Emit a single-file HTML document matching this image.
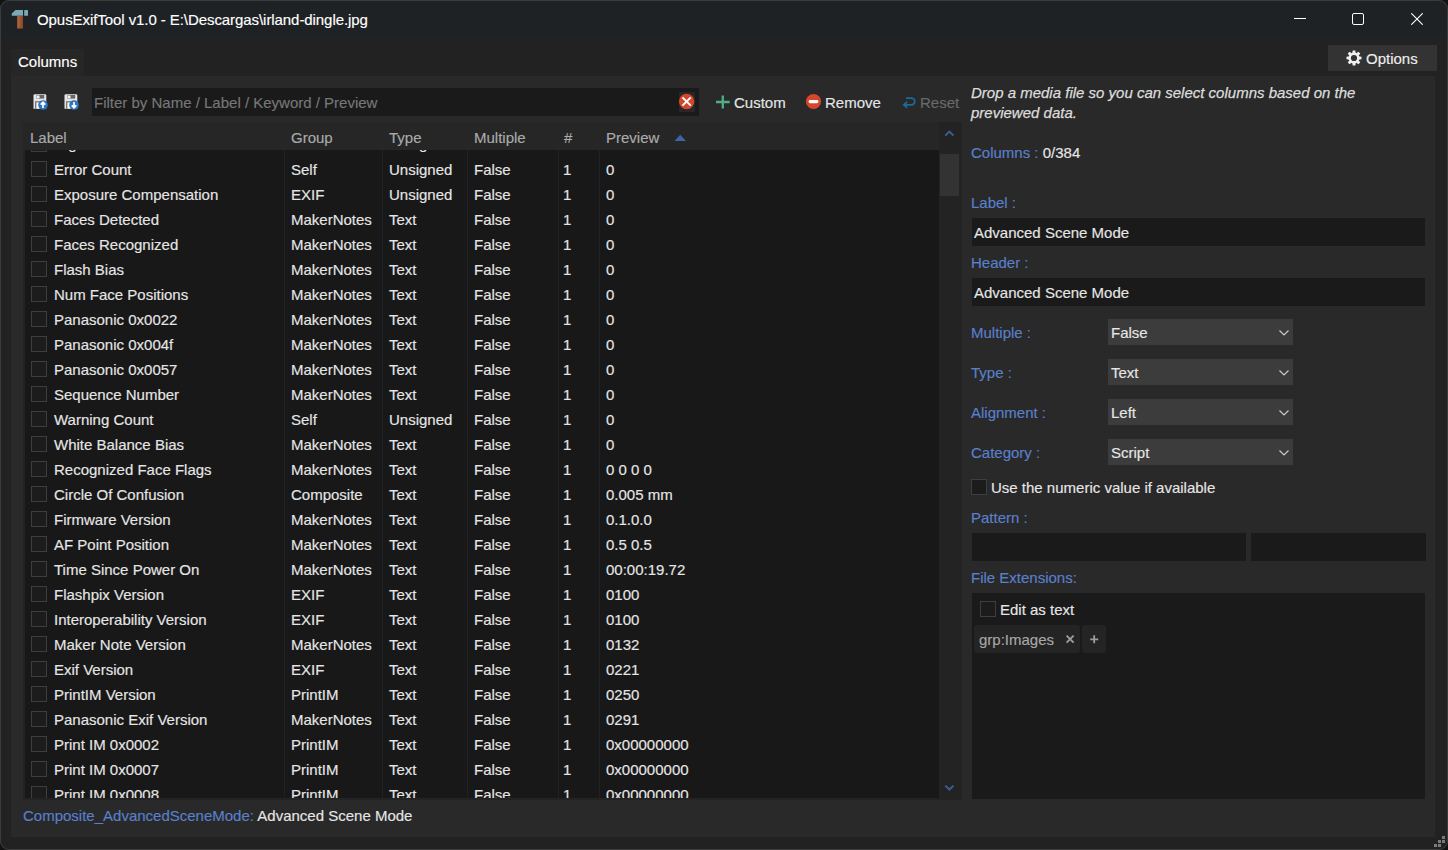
<!DOCTYPE html>
<html><head><meta charset="utf-8"><style>
*{box-sizing:border-box;margin:0;padding:0}
html,body{width:1448px;height:850px;overflow:hidden;background:#131313}
body{font-family:"Liberation Sans",sans-serif;font-size:15px;color:#e6e6e6;position:relative}
.t{-webkit-text-stroke:0.15px currentColor}
.a{position:absolute}
.win{left:0;top:0;width:1448px;height:850px;border-radius:9px;background:#222222;overflow:hidden}
.frame{left:0;top:0;width:1448px;height:850px;border:1px solid #3c3c3c;border-radius:9px}
.t{position:absolute;white-space:pre;line-height:20px}
.blue{color:#5a80cc}
.inp{position:absolute;background:#1a1a1a}
.cb{position:absolute;width:16px;height:16px;border:1px solid #3e3e3e;background:#1c1c1c}
</style></head><body>
<div class="a win">
<div class="a" style="left:0px;top:0px;width:1448px;height:38px;background:#1f2225;"></div><svg class="a" style="left:0;top:0" width="40" height="38" viewBox="0 0 40 38">
<defs><linearGradient id="hg" x1="0" x2="1"><stop offset="0" stop-color="#b0683f"/><stop offset="1" stop-color="#8a4526"/></linearGradient></defs>
<path d="M15.5 10.1 H23 V15.8 H11.8 V13.6 Z" fill="#7aaab8"/>
<rect x="24.2" y="10.1" width="3.8" height="5.7" rx="0.6" fill="#7aaab8"/>
<rect x="17.2" y="15.8" width="5.8" height="12.7" fill="url(#hg)"/>
</svg><div class="t" style="left:37px;top:10px;color:#fff;letter-spacing:-0.07px">OpusExifTool v1.0 - E:\Descargas\irland-dingle.jpg</div><div class="a" style="left:1294px;top:18px;width:12px;height:1px;background:#fff;"></div><div class="a" style="left:1352px;top:13px;width:12px;height:12px;background:transparent;border:1px solid #fff;border-radius:2px"></div><svg class="a" style="left:1411px;top:13px" width="12" height="12" viewBox="0 0 12 12"><path d="M0.3 0.3 L11.7 11.7 M11.7 0.3 L0.3 11.7" stroke="#fff" stroke-width="1.1"/></svg><div class="a" style="left:11px;top:49px;width:73px;height:27px;background:#262626;"></div><div class="t" style="left:18px;top:52px;color:#fff">Columns</div><div class="a" style="left:1328px;top:45px;width:109px;height:26px;background:#333333;"></div><svg class="a" style="left:1346px;top:50px" width="16" height="16" viewBox="0 0 16 16">
<g fill="#f0f0f0"><path d="M6.7 0.5 H9.3 L9.8 3.5 H6.2 Z" transform="rotate(0 8 8)"/><path d="M6.7 0.5 H9.3 L9.8 3.5 H6.2 Z" transform="rotate(45 8 8)"/><path d="M6.7 0.5 H9.3 L9.8 3.5 H6.2 Z" transform="rotate(90 8 8)"/><path d="M6.7 0.5 H9.3 L9.8 3.5 H6.2 Z" transform="rotate(135 8 8)"/><path d="M6.7 0.5 H9.3 L9.8 3.5 H6.2 Z" transform="rotate(180 8 8)"/><path d="M6.7 0.5 H9.3 L9.8 3.5 H6.2 Z" transform="rotate(225 8 8)"/><path d="M6.7 0.5 H9.3 L9.8 3.5 H6.2 Z" transform="rotate(270 8 8)"/><path d="M6.7 0.5 H9.3 L9.8 3.5 H6.2 Z" transform="rotate(315 8 8)"/><circle cx="8" cy="8" r="5.4"/></g><circle cx="8" cy="8" r="3.1" fill="#333"/></svg><div class="t" style="left:1366px;top:49px;color:#eee">Options</div><div class="a" style="left:11px;top:76px;width:1424px;height:761px;background:#292929;"></div><svg class="a" style="left:32px;top:93px" width="16" height="17" viewBox="0 0 16 17">
<path d="M1.5 2.6 Q1.5 1.2 2.9 1.2 H13 Q14.3 1.2 14.3 2.6 V15.7 H1.5 Z" fill="#e6e6e6"/>
<rect x="4.4" y="2" width="7.8" height="3.6" fill="#666"/><rect x="4.7" y="2.5" width="2.8" height="2.8" fill="#f4f4f4"/>
<rect x="3" y="8.2" width="10" height="7.5" fill="#777"/><rect x="4.4" y="9.5" width="7.3" height="6.2" fill="#fafafa"/>
<circle cx="11" cy="12" r="4.8" fill="#2f74c0"/><path d="M11 15 V9.5 M8.7 11.7 L11 9.3 L13.3 11.7" fill="none" stroke="#fff" stroke-width="1.7"/>
</svg><svg class="a" style="left:63px;top:93px" width="16" height="17" viewBox="0 0 16 17">
<path d="M1.5 2.6 Q1.5 1.2 2.9 1.2 H13 Q14.3 1.2 14.3 2.6 V15.7 H1.5 Z" fill="#e6e6e6"/>
<rect x="4.4" y="2" width="7.8" height="3.6" fill="#666"/><rect x="4.7" y="2.5" width="2.8" height="2.8" fill="#f4f4f4"/>
<rect x="3" y="8.2" width="10" height="7.5" fill="#777"/><rect x="4.4" y="9.5" width="7.3" height="6.2" fill="#fafafa"/>
<circle cx="11" cy="12" r="4.8" fill="#2f74c0"/><path d="M11 9 V14.5 M8.7 12.3 L11 14.7 L13.3 12.3" fill="none" stroke="#fff" stroke-width="1.7"/>
</svg><div class="a" style="left:92px;top:88px;width:607px;height:28px;background:#1a1a1a;"></div><div class="t" style="left:94px;top:93px;color:#777">Filter by Name / Label / Keyword / Preview</div><div class="a" style="left:679px;top:92px;width:16px;height:20px;background:#272727;"></div><svg class="a" style="left:678px;top:93px" width="18" height="18" viewBox="0 0 18 18"><circle cx="8.6" cy="8.5" r="7.7" fill="#d6462c"/><path d="M4.4 4.3 L12.8 12.7 M12.8 4.3 L4.4 12.7" stroke="#fff" stroke-width="1.9"/></svg><svg class="a" style="left:715px;top:95px" width="16" height="15" viewBox="0 0 16 15"><path d="M7.8 0.4 V13.6 M1 7 H14.7" stroke="#4fae86" stroke-width="2.3"/></svg><div class="t" style="left:734px;top:93px;">Custom</div><svg class="a" style="left:805px;top:93px" width="18" height="18" viewBox="0 0 18 18"><circle cx="8.5" cy="8.5" r="7.6" fill="#d6462c"/><rect x="3.6" y="7" width="9.8" height="3.2" rx="1.4" fill="#fff"/></svg><div class="t" style="left:825px;top:93px;">Remove</div><svg class="a" style="left:902px;top:96px" width="15" height="15" viewBox="0 0 15 15"><path d="M4 2.2 H9.5 A3.3 3.3 0 0 1 9.5 8.8 H2.2 M5.2 5.8 L1.8 8.8 L5.2 11.8" fill="none" stroke="#1d6a9c" stroke-width="1.7"/></svg><div class="t" style="left:920px;top:93px;color:#6a6a6a">Reset</div><div class="a" style="left:23px;top:122px;width:939px;height:678px;background:#232323;"></div><div class="a" style="left:23px;top:122px;width:916px;height:28px;background:#262626;"></div><div class="t" style="left:30px;top:128px;color:#ababab">Label</div><div class="t" style="left:291px;top:128px;color:#ababab">Group</div><div class="t" style="left:389px;top:128px;color:#ababab">Type</div><div class="t" style="left:474px;top:128px;color:#ababab">Multiple</div><div class="t" style="left:564px;top:128px;color:#ababab">#</div><div class="t" style="left:606px;top:128px;color:#ababab">Preview</div><svg class="a" style="left:674px;top:134px" width="13" height="8" viewBox="0 0 13 8"><path d="M0.5 7 L6.2 0.8 L12 7 Z" fill="#3e64a8"/></svg><div class="a" style="left:25px;top:150px;width:914px;height:648px;background:#181818;overflow:hidden"><div class="a" style="left:259px;top:0px;width:1px;height:648px;background:#1f2227;"></div><div class="a" style="left:357px;top:0px;width:1px;height:648px;background:#1f2227;"></div><div class="a" style="left:442px;top:0px;width:1px;height:648px;background:#1f2227;"></div><div class="a" style="left:533px;top:0px;width:1px;height:648px;background:#1f2227;"></div><div class="a" style="left:574px;top:0px;width:1px;height:648px;background:#1f2227;"></div><div class="cb" style="left:6px;top:-14px"></div><div class="t" style="left:29px;top:-16px">Digital Zoom</div><div class="t" style="left:266px;top:-16px">EXIF</div><div class="t" style="left:364px;top:-16px">Unsigned</div><div class="t" style="left:449px;top:-16px">False</div><div class="t" style="left:538px;top:-16px">1</div><div class="t" style="left:581px;top:-16px">0</div><div class="cb" style="left:6px;top:11px"></div><div class="t" style="left:29px;top:10px">Error Count</div><div class="t" style="left:266px;top:10px">Self</div><div class="t" style="left:364px;top:10px">Unsigned</div><div class="t" style="left:449px;top:10px">False</div><div class="t" style="left:538px;top:10px">1</div><div class="t" style="left:581px;top:10px">0</div><div class="cb" style="left:6px;top:36px"></div><div class="t" style="left:29px;top:35px">Exposure Compensation</div><div class="t" style="left:266px;top:35px">EXIF</div><div class="t" style="left:364px;top:35px">Unsigned</div><div class="t" style="left:449px;top:35px">False</div><div class="t" style="left:538px;top:35px">1</div><div class="t" style="left:581px;top:35px">0</div><div class="cb" style="left:6px;top:61px"></div><div class="t" style="left:29px;top:60px">Faces Detected</div><div class="t" style="left:266px;top:60px">MakerNotes</div><div class="t" style="left:364px;top:60px">Text</div><div class="t" style="left:449px;top:60px">False</div><div class="t" style="left:538px;top:60px">1</div><div class="t" style="left:581px;top:60px">0</div><div class="cb" style="left:6px;top:86px"></div><div class="t" style="left:29px;top:85px">Faces Recognized</div><div class="t" style="left:266px;top:85px">MakerNotes</div><div class="t" style="left:364px;top:85px">Text</div><div class="t" style="left:449px;top:85px">False</div><div class="t" style="left:538px;top:85px">1</div><div class="t" style="left:581px;top:85px">0</div><div class="cb" style="left:6px;top:111px"></div><div class="t" style="left:29px;top:110px">Flash Bias</div><div class="t" style="left:266px;top:110px">MakerNotes</div><div class="t" style="left:364px;top:110px">Text</div><div class="t" style="left:449px;top:110px">False</div><div class="t" style="left:538px;top:110px">1</div><div class="t" style="left:581px;top:110px">0</div><div class="cb" style="left:6px;top:136px"></div><div class="t" style="left:29px;top:135px">Num Face Positions</div><div class="t" style="left:266px;top:135px">MakerNotes</div><div class="t" style="left:364px;top:135px">Text</div><div class="t" style="left:449px;top:135px">False</div><div class="t" style="left:538px;top:135px">1</div><div class="t" style="left:581px;top:135px">0</div><div class="cb" style="left:6px;top:161px"></div><div class="t" style="left:29px;top:160px">Panasonic 0x0022</div><div class="t" style="left:266px;top:160px">MakerNotes</div><div class="t" style="left:364px;top:160px">Text</div><div class="t" style="left:449px;top:160px">False</div><div class="t" style="left:538px;top:160px">1</div><div class="t" style="left:581px;top:160px">0</div><div class="cb" style="left:6px;top:186px"></div><div class="t" style="left:29px;top:185px">Panasonic 0x004f</div><div class="t" style="left:266px;top:185px">MakerNotes</div><div class="t" style="left:364px;top:185px">Text</div><div class="t" style="left:449px;top:185px">False</div><div class="t" style="left:538px;top:185px">1</div><div class="t" style="left:581px;top:185px">0</div><div class="cb" style="left:6px;top:211px"></div><div class="t" style="left:29px;top:210px">Panasonic 0x0057</div><div class="t" style="left:266px;top:210px">MakerNotes</div><div class="t" style="left:364px;top:210px">Text</div><div class="t" style="left:449px;top:210px">False</div><div class="t" style="left:538px;top:210px">1</div><div class="t" style="left:581px;top:210px">0</div><div class="cb" style="left:6px;top:236px"></div><div class="t" style="left:29px;top:235px">Sequence Number</div><div class="t" style="left:266px;top:235px">MakerNotes</div><div class="t" style="left:364px;top:235px">Text</div><div class="t" style="left:449px;top:235px">False</div><div class="t" style="left:538px;top:235px">1</div><div class="t" style="left:581px;top:235px">0</div><div class="cb" style="left:6px;top:261px"></div><div class="t" style="left:29px;top:260px">Warning Count</div><div class="t" style="left:266px;top:260px">Self</div><div class="t" style="left:364px;top:260px">Unsigned</div><div class="t" style="left:449px;top:260px">False</div><div class="t" style="left:538px;top:260px">1</div><div class="t" style="left:581px;top:260px">0</div><div class="cb" style="left:6px;top:286px"></div><div class="t" style="left:29px;top:285px">White Balance Bias</div><div class="t" style="left:266px;top:285px">MakerNotes</div><div class="t" style="left:364px;top:285px">Text</div><div class="t" style="left:449px;top:285px">False</div><div class="t" style="left:538px;top:285px">1</div><div class="t" style="left:581px;top:285px">0</div><div class="cb" style="left:6px;top:311px"></div><div class="t" style="left:29px;top:310px">Recognized Face Flags</div><div class="t" style="left:266px;top:310px">MakerNotes</div><div class="t" style="left:364px;top:310px">Text</div><div class="t" style="left:449px;top:310px">False</div><div class="t" style="left:538px;top:310px">1</div><div class="t" style="left:581px;top:310px">0 0 0 0</div><div class="cb" style="left:6px;top:336px"></div><div class="t" style="left:29px;top:335px">Circle Of Confusion</div><div class="t" style="left:266px;top:335px">Composite</div><div class="t" style="left:364px;top:335px">Text</div><div class="t" style="left:449px;top:335px">False</div><div class="t" style="left:538px;top:335px">1</div><div class="t" style="left:581px;top:335px">0.005 mm</div><div class="cb" style="left:6px;top:361px"></div><div class="t" style="left:29px;top:360px">Firmware Version</div><div class="t" style="left:266px;top:360px">MakerNotes</div><div class="t" style="left:364px;top:360px">Text</div><div class="t" style="left:449px;top:360px">False</div><div class="t" style="left:538px;top:360px">1</div><div class="t" style="left:581px;top:360px">0.1.0.0</div><div class="cb" style="left:6px;top:386px"></div><div class="t" style="left:29px;top:385px">AF Point Position</div><div class="t" style="left:266px;top:385px">MakerNotes</div><div class="t" style="left:364px;top:385px">Text</div><div class="t" style="left:449px;top:385px">False</div><div class="t" style="left:538px;top:385px">1</div><div class="t" style="left:581px;top:385px">0.5 0.5</div><div class="cb" style="left:6px;top:411px"></div><div class="t" style="left:29px;top:410px">Time Since Power On</div><div class="t" style="left:266px;top:410px">MakerNotes</div><div class="t" style="left:364px;top:410px">Text</div><div class="t" style="left:449px;top:410px">False</div><div class="t" style="left:538px;top:410px">1</div><div class="t" style="left:581px;top:410px">00:00:19.72</div><div class="cb" style="left:6px;top:436px"></div><div class="t" style="left:29px;top:435px">Flashpix Version</div><div class="t" style="left:266px;top:435px">EXIF</div><div class="t" style="left:364px;top:435px">Text</div><div class="t" style="left:449px;top:435px">False</div><div class="t" style="left:538px;top:435px">1</div><div class="t" style="left:581px;top:435px">0100</div><div class="cb" style="left:6px;top:461px"></div><div class="t" style="left:29px;top:460px">Interoperability Version</div><div class="t" style="left:266px;top:460px">EXIF</div><div class="t" style="left:364px;top:460px">Text</div><div class="t" style="left:449px;top:460px">False</div><div class="t" style="left:538px;top:460px">1</div><div class="t" style="left:581px;top:460px">0100</div><div class="cb" style="left:6px;top:486px"></div><div class="t" style="left:29px;top:485px">Maker Note Version</div><div class="t" style="left:266px;top:485px">MakerNotes</div><div class="t" style="left:364px;top:485px">Text</div><div class="t" style="left:449px;top:485px">False</div><div class="t" style="left:538px;top:485px">1</div><div class="t" style="left:581px;top:485px">0132</div><div class="cb" style="left:6px;top:511px"></div><div class="t" style="left:29px;top:510px">Exif Version</div><div class="t" style="left:266px;top:510px">EXIF</div><div class="t" style="left:364px;top:510px">Text</div><div class="t" style="left:449px;top:510px">False</div><div class="t" style="left:538px;top:510px">1</div><div class="t" style="left:581px;top:510px">0221</div><div class="cb" style="left:6px;top:536px"></div><div class="t" style="left:29px;top:535px">PrintIM Version</div><div class="t" style="left:266px;top:535px">PrintIM</div><div class="t" style="left:364px;top:535px">Text</div><div class="t" style="left:449px;top:535px">False</div><div class="t" style="left:538px;top:535px">1</div><div class="t" style="left:581px;top:535px">0250</div><div class="cb" style="left:6px;top:561px"></div><div class="t" style="left:29px;top:560px">Panasonic Exif Version</div><div class="t" style="left:266px;top:560px">MakerNotes</div><div class="t" style="left:364px;top:560px">Text</div><div class="t" style="left:449px;top:560px">False</div><div class="t" style="left:538px;top:560px">1</div><div class="t" style="left:581px;top:560px">0291</div><div class="cb" style="left:6px;top:586px"></div><div class="t" style="left:29px;top:585px">Print IM 0x0002</div><div class="t" style="left:266px;top:585px">PrintIM</div><div class="t" style="left:364px;top:585px">Text</div><div class="t" style="left:449px;top:585px">False</div><div class="t" style="left:538px;top:585px">1</div><div class="t" style="left:581px;top:585px">0x00000000</div><div class="cb" style="left:6px;top:611px"></div><div class="t" style="left:29px;top:610px">Print IM 0x0007</div><div class="t" style="left:266px;top:610px">PrintIM</div><div class="t" style="left:364px;top:610px">Text</div><div class="t" style="left:449px;top:610px">False</div><div class="t" style="left:538px;top:610px">1</div><div class="t" style="left:581px;top:610px">0x00000000</div><div class="cb" style="left:6px;top:636px"></div><div class="t" style="left:29px;top:635px">Print IM 0x0008</div><div class="t" style="left:266px;top:635px">PrintIM</div><div class="t" style="left:364px;top:635px">Text</div><div class="t" style="left:449px;top:635px">False</div><div class="t" style="left:538px;top:635px">1</div><div class="t" style="left:581px;top:635px">0x00000000</div></div><svg class="a" style="left:943px;top:129px" width="13" height="9" viewBox="0 0 13 9"><path d="M2.3 6.6 L6.4 2.6 L10.5 6.6" fill="none" stroke="#3b5d96" stroke-width="2"/></svg><div class="a" style="left:940px;top:154px;width:19px;height:42px;background:#333333;"></div><svg class="a" style="left:943px;top:783px" width="13" height="9" viewBox="0 0 13 9"><path d="M2.3 2.6 L6.4 6.5 L10.5 2.6" fill="none" stroke="#3b5d96" stroke-width="2"/></svg><div class="t" style="left:971px;top:83px;font-style:italic;color:#ddd;-webkit-text-stroke:0.25px #ddd">Drop a media file so you can select columns based on the</div><div class="t" style="left:971px;top:103px;font-style:italic;color:#ddd;-webkit-text-stroke:0.25px #ddd">previewed data.</div><div class="t" style="left:971px;top:143px;"><span class="blue">Columns : </span>0/384</div><div class="t" style="left:971px;top:193px;color:#5a80cc">Label :</div><div class="a" style="left:972px;top:218px;width:453px;height:28px;background:#1a1a1a;"></div><div class="t" style="left:974px;top:223px;">Advanced Scene Mode</div><div class="t" style="left:971px;top:253px;color:#5a80cc">Header :</div><div class="a" style="left:972px;top:278px;width:453px;height:28px;background:#1a1a1a;"></div><div class="t" style="left:974px;top:283px;">Advanced Scene Mode</div><div class="t" style="left:971px;top:323px;color:#5a80cc">Multiple :</div><div class="a" style="left:1108px;top:319px;width:185px;height:26px;background:#3c3c3c;"></div><div class="t" style="left:1111px;top:323px;">False</div><svg class="a" style="left:1278px;top:329px" width="12" height="8" viewBox="0 0 12 8"><path d="M1.5 1.5 L6 6 L10.5 1.5" fill="none" stroke="#d0d0d0" stroke-width="1.1"/></svg><div class="t" style="left:971px;top:363px;color:#5a80cc">Type :</div><div class="a" style="left:1108px;top:359px;width:185px;height:26px;background:#3c3c3c;"></div><div class="t" style="left:1111px;top:363px;">Text</div><svg class="a" style="left:1278px;top:369px" width="12" height="8" viewBox="0 0 12 8"><path d="M1.5 1.5 L6 6 L10.5 1.5" fill="none" stroke="#d0d0d0" stroke-width="1.1"/></svg><div class="t" style="left:971px;top:403px;color:#5a80cc">Alignment :</div><div class="a" style="left:1108px;top:399px;width:185px;height:26px;background:#3c3c3c;"></div><div class="t" style="left:1111px;top:403px;">Left</div><svg class="a" style="left:1278px;top:409px" width="12" height="8" viewBox="0 0 12 8"><path d="M1.5 1.5 L6 6 L10.5 1.5" fill="none" stroke="#d0d0d0" stroke-width="1.1"/></svg><div class="t" style="left:971px;top:443px;color:#5a80cc">Category :</div><div class="a" style="left:1108px;top:439px;width:185px;height:26px;background:#3c3c3c;"></div><div class="t" style="left:1111px;top:443px;">Script</div><svg class="a" style="left:1278px;top:449px" width="12" height="8" viewBox="0 0 12 8"><path d="M1.5 1.5 L6 6 L10.5 1.5" fill="none" stroke="#d0d0d0" stroke-width="1.1"/></svg><div class="cb" style="left:971px;top:479px"></div><div class="t" style="left:991px;top:478px;">Use the numeric value if available</div><div class="t" style="left:971px;top:508px;color:#5a80cc">Pattern :</div><div class="a" style="left:972px;top:533px;width:274px;height:28px;background:#1a1a1a;"></div><div class="a" style="left:1251px;top:533px;width:175px;height:28px;background:#1a1a1a;"></div><div class="t" style="left:971px;top:568px;color:#5a80cc">File Extensions:</div><div class="a" style="left:972px;top:593px;width:453px;height:206px;background:#1a1a1a;"></div><div class="cb" style="left:980px;top:601px"></div><div class="t" style="left:1000px;top:600px;">Edit as text</div><div class="a" style="left:974px;top:625px;width:106px;height:28px;background:#242424;border-radius:3px"></div><div class="t" style="left:979px;top:630px;color:#a8a8a8">grp:Images</div><svg class="a" style="left:1065px;top:634px" width="10" height="10" viewBox="0 0 10 10"><path d="M1.6 1.6 L8.6 8.6 M8.6 1.6 L1.6 8.6" stroke="#9c9c9c" stroke-width="1.9"/></svg><div class="a" style="left:1082px;top:625px;width:24px;height:28px;background:#242424;border-radius:3px"></div><svg class="a" style="left:1090px;top:635px" width="9" height="9" viewBox="0 0 9 9"><path d="M4.2 0.3 V8.3 M0.2 4.3 H8.2" stroke="#9c9c9c" stroke-width="1.8"/></svg><div class="t" style="left:23px;top:806px;"><span class="blue">Composite_AdvancedSceneMode:</span> Advanced Scene Mode</div><div class="a" style="left:1442px;top:836px;width:3px;height:3px;background:#7a7a7a;"></div><div class="a" style="left:1438px;top:840px;width:3px;height:3px;background:#7a7a7a;"></div><div class="a" style="left:1442px;top:840px;width:3px;height:3px;background:#7a7a7a;"></div><div class="a" style="left:1434px;top:844px;width:3px;height:3px;background:#7a7a7a;"></div><div class="a" style="left:1438px;top:844px;width:3px;height:3px;background:#7a7a7a;"></div>
</div>
<div class="a frame"></div>
</body></html>
